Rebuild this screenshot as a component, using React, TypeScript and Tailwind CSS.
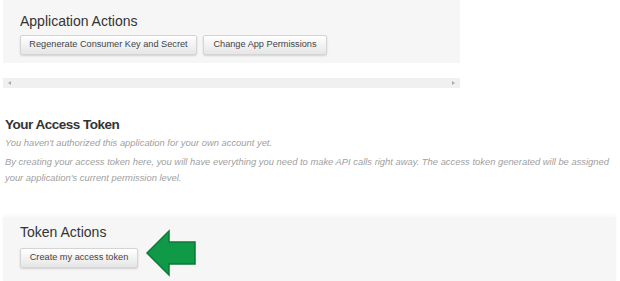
import React from "react";

function Btn({ children, w }: { children: React.ReactNode; w: string }) {
  return (
    <div
      className={`${w} h-[20px] flex items-center justify-center rounded-[2px] border border-[#d4d4d4] bg-gradient-to-b from-[#ffffff] to-[#e6e6e6] shadow-[0_1px_2px_rgba(0,0,0,0.15)] text-[9.2px] text-[#444] leading-none whitespace-nowrap`}
    >
      {children}
    </div>
  );
}

export default function App() {
  return (
    <div
      className="relative w-[620px] h-[281px] bg-white overflow-hidden"
      style={{ fontFamily: '"Liberation Sans", Arial, sans-serif' }}
    >
      <div className="ml-[3px] w-[457px] h-[63px] bg-[#f6f6f6] pl-[17px] pt-[13px]">
        <div className="text-[14px] leading-[16px] text-[#333]">Application Actions</div>
        <div className="mt-[6px] flex gap-[6px]">
          <Btn w="w-[177px]">Regenerate Consumer Key and Secret</Btn>
          <Btn w="w-[124px]">Change App Permissions</Btn>
        </div>
      </div>

      <div className="ml-[3px] mt-[15px] w-[457px] h-[10px] bg-[#f0f0f0] flex items-center justify-between px-[5px]">
        <div className="w-0 h-0 border-y-[2px] border-y-transparent border-r-[3px] border-r-[#aaa]" />
        <div className="w-0 h-0 border-y-[2px] border-y-transparent border-l-[3px] border-l-[#aaa]" />
      </div>

      <div className="ml-[5px] mt-[29px] pr-[4px]">
        <div className="text-[13.5px] leading-[16px] font-bold tracking-[-0.5px] text-[#333]">Your Access Token</div>
        <div className="mt-[4px] text-[9.4px] leading-[12px] italic text-[#a0a0a0]">
          You haven't authorized this application for your own account yet.
        </div>
        <div className="mt-[5px] text-[9.4px] leading-[16px] italic text-[#a0a0a0]">
          By creating your access token here, you will have everything you need to make API calls right away. The access token generated will be assigned your application's current permission level.
        </div>
      </div>

      <div className="absolute left-[3px] top-[217px] w-[613px] h-[64px] bg-[#f6f6f6] shadow-[0_-2px_4px_rgba(0,0,0,0.03)] pl-[17px] pt-[7px]">
        <div className="text-[14px] leading-[16px] text-[#333]">Token Actions</div>
        <div className="mt-[8px] flex">
          <Btn w="w-[118px]">Create my access token</Btn>
        </div>
      </div>

      <svg className="absolute left-0 top-0" width="620" height="281" viewBox="0 0 620 281">
        <polygon
          points="147,253 169,231 169,242 195,242 195,264 169,264 169,275"
          fill="#109a48"
          stroke="#0b7a36"
          strokeWidth="1.5"
          strokeLinejoin="miter"
        />
      </svg>
    </div>
  );
}
